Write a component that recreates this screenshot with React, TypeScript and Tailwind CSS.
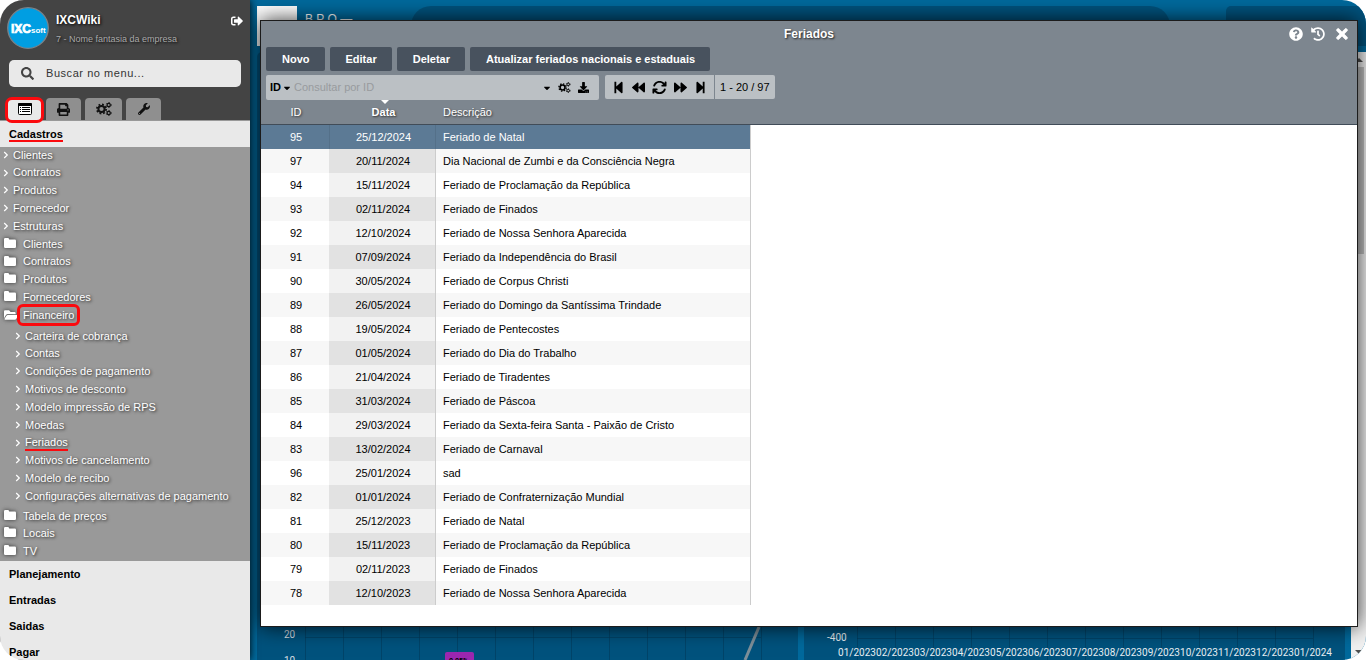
import { useState } from "react";
import {
  FaBackward,
  FaCaretDown,
  FaDownload,
  FaFolderOpen,
  FaForward,
  FaHistory,
  FaPrint,
  FaQuestionCircle,
  FaSearch,
  FaSignOutAlt,
  FaStepBackward,
  FaStepForward,
  FaTimes,
  FaWrench,
} from "react-icons/fa";
import { FaArrowsRotate } from "react-icons/fa6";

type Holiday = { id: number; date: string; name: string };

const holidays: Holiday[] = [
  { id: 95, date: "25/12/2024", name: "Feriado de Natal" },
  { id: 97, date: "20/11/2024", name: "Dia Nacional de Zumbi e da Consciência Negra" },
  { id: 94, date: "15/11/2024", name: "Feriado de Proclamação da República" },
  { id: 93, date: "02/11/2024", name: "Feriado de Finados" },
  { id: 92, date: "12/10/2024", name: "Feriado de Nossa Senhora Aparecida" },
  { id: 91, date: "07/09/2024", name: "Feriado da Independência do Brasil" },
  { id: 90, date: "30/05/2024", name: "Feriado de Corpus Christi" },
  { id: 89, date: "26/05/2024", name: "Feriado do Domingo da Santíssima Trindade" },
  { id: 88, date: "19/05/2024", name: "Feriado de Pentecostes" },
  { id: 87, date: "01/05/2024", name: "Feriado do Dia do Trabalho" },
  { id: 86, date: "21/04/2024", name: "Feriado de Tiradentes" },
  { id: 85, date: "31/03/2024", name: "Feriado de Páscoa" },
  { id: 84, date: "29/03/2024", name: "Feriado da Sexta-feira Santa - Paixão de Cristo" },
  { id: 83, date: "13/02/2024", name: "Feriado de Carnaval" },
  { id: 96, date: "25/01/2024", name: "sad" },
  { id: 82, date: "01/01/2024", name: "Feriado de Confraternização Mundial" },
  { id: 81, date: "25/12/2023", name: "Feriado de Natal" },
  { id: 80, date: "15/11/2023", name: "Feriado de Proclamação da República" },
  { id: 79, date: "02/11/2023", name: "Feriado de Finados" },
  { id: 78, date: "12/10/2023", name: "Feriado de Nossa Senhora Aparecida" },
];

const shortcuts = ["Clientes", "Contratos", "Produtos", "Fornecedor", "Estruturas"];
const folders = ["Clientes", "Contratos", "Produtos", "Fornecedores"];
const financeItems = [
  "Carteira de cobrança",
  "Contas",
  "Condições de pagamento",
  "Motivos de desconto",
  "Modelo impressão de RPS",
  "Moedas",
  "Feriados",
  "Motivos de cancelamento",
  "Modelo de recibo",
  "Configurações alternativas de pagamento",
];
const lastFolders = ["Tabela de preços", "Locais", "TV"];
const sections = ["Planejamento", "Entradas", "Saidas", "Pagar"];
const months = [
  "01/2023", "02/2023", "03/2023", "04/2023", "05/2023", "06/2023", "07/2023",
  "08/2023", "09/2023", "10/2023", "11/2023", "12/2023", "01/2024",
];

function Chevron() {
  return (
    <svg viewBox="0 0 6 8" className="h-2 w-1.5 shrink-0" fill="none" stroke="currentColor" strokeWidth="1.2" aria-hidden="true">
      <path d="M1.2 1 4.3 4 1.2 7" />
    </svg>
  );
}

function ListIcon() {
  return (
    <svg viewBox="0 0 14 12" className="h-3 w-3.5" aria-hidden="true">
      <rect x="0.5" y="0.5" width="13" height="11" rx="1" fill="#fff" stroke="#000" />
      <rect x="0" y="0" width="14" height="3" rx="1" fill="#000" />
      <path d="M2 4.5h1M2 6.5h1M2 8.5h1M4 4.5h8M4 6.5h8M4 8.5h8" stroke="#000" />
    </svg>
  );
}

function GearsIcon({ className }: { className: string }) {
  return (
    <svg viewBox="0 0 16 14" className={className} fill="none" stroke="currentColor" aria-hidden="true">
      <circle cx="5.5" cy="7" r="3.1" strokeWidth="2" />
      <circle cx="5.5" cy="7" r="4.6" strokeWidth="1.8" strokeDasharray="1.81 1.8" />
      <circle cx="12.7" cy="3" r="1.6" strokeWidth="1.2" />
      <circle cx="12.7" cy="3" r="2.4" strokeWidth="1" strokeDasharray="1.26 1.25" />
      <circle cx="12.7" cy="11" r="1.6" strokeWidth="1.2" />
      <circle cx="12.7" cy="11" r="2.4" strokeWidth="1" strokeDasharray="1.26 1.25" />
    </svg>
  );
}

function FolderIcon() {
  return (
    <svg viewBox="0 0 12 10" className="mb-0.5 h-2.5 w-3 shrink-0 drop-shadow-[0_0_2px_#333]" fill="#fff" aria-hidden="true">
      <path d="M0 1.2Q0 0 1.2 0H4Q5.2 0 5.2 1.5H10.8Q12 1.5 12 2.7V8.8Q12 10 10.8 10H1.2Q0 10 0 8.8Z" />
    </svg>
  );
}

function ShortcutLink({ label }: { label: string }) {
  return (
    <li className="flex">
      <a href="#" className="flex items-center gap-1 pl-[3px]">
        <Chevron />
        {label}
      </a>
    </li>
  );
}

function FolderLink({ label }: { label: string }) {
  return (
    <li className="flex">
      <a href="#" className="flex items-center gap-[7px] pl-1">
        <FolderIcon />
        {label}
      </a>
    </li>
  );
}

function Sidebar() {
  return (
    <aside className="relative z-10 flex w-[250px] shrink-0 flex-col bg-[#e9e9e9] shadow-[0_0_8px_#000]">
      <header className="flex h-[121px] shrink-0 flex-col border-b border-[#999] bg-[#444]">
        <div className="flex items-start pt-[7px] pl-[7px]">
          <svg viewBox="0 0 42 42" className="h-[42px] w-[42px] shrink-0" role="img" aria-label="IXC soft">
            <circle cx="21" cy="21" r="20.3" fill="#009ee2" stroke="#7b8288" strokeWidth="1.3" />
            <text x="4" y="26" fontFamily="Liberation Sans, Arial, sans-serif" fontWeight="700" fontSize="12" fill="#fff" stroke="#fff" strokeWidth="0.7">IXC</text>
            <text x="24" y="26" fontFamily="Liberation Sans, Arial, sans-serif" fontWeight="700" fontSize="8" fill="#fff">soft</text>
          </svg>
          <div className="ml-[7px] flex flex-1 flex-col pt-1 [text-shadow:1px_1px_3px_#000]">
            <strong className="text-[12px] leading-[18px] text-white">IXCWiki</strong>
            <span className="text-[9px] leading-[20px] text-[#aaa]">7 - Nome fantasia da empresa</span>
          </div>
          <button type="button" aria-label="Sair" className="mt-2 mr-[7px] text-white">
            <FaSignOutAlt className="h-3 w-3" />
          </button>
        </div>
        <label className="mx-[9px] mt-[11px] flex h-[27px] shrink-0 items-center gap-3 rounded-[5px] bg-[#e9e9e9] pl-3">
          <FaSearch className="h-[13px] w-[13px] text-[#444]" />
          <input
            type="text"
            aria-label="Buscar no menu"
            placeholder="Buscar no menu..."
            className="min-w-0 flex-1 bg-transparent text-[11px] tracking-wider outline-none placeholder:text-[#333]"
          />
        </label>
        <div className="mt-auto flex gap-1 pl-[7px] text-[#111]">
          <button type="button" aria-label="Menu" className="relative flex h-[22px] w-[35px] items-center justify-center rounded-t-[4px] bg-[#e9e9e9]">
            <ListIcon />
            <span className="absolute -inset-x-0.5 -top-px -bottom-[3px] rounded-[7px] border-3 border-[#fb0a0e]" />
          </button>
          <button type="button" aria-label="Imprimir" className="flex h-[22px] w-[35px] items-center justify-center rounded-t-[4px] bg-[#8f8f8f]">
            <FaPrint className="h-[13px] w-[13px]" />
          </button>
          <button type="button" aria-label="Configurações" className="flex h-[22px] w-[37px] items-center justify-center rounded-t-[4px] bg-[#8f8f8f]">
            <GearsIcon className="h-3.5 w-4" />
          </button>
          <button type="button" aria-label="Ferramentas" className="flex h-[22px] w-[35px] items-center justify-center rounded-t-[4px] bg-[#8f8f8f]">
            <FaWrench className="h-3 w-3" />
          </button>
        </div>
      </header>

      <a href="#" className="flex h-[26px] shrink-0 items-center px-[9px] text-[11px] font-bold text-black">
        <span className="relative">
          Cadastros
          <span className="absolute inset-x-0 bottom-0 h-0.5 bg-[#fb0a0e]" />
        </span>
      </a>

      <nav aria-label="Cadastros" className="h-[414px] shrink-0 bg-[#999] text-[11px] text-white [text-shadow:1px_1px_3px_#222]">
        <ul className="-mt-px grid h-[178px] auto-rows-fr">
          {shortcuts.map((label) => (
            <ShortcutLink key={label} label={label} />
          ))}
          {folders.map((label) => (
            <FolderLink key={label} label={label} />
          ))}
          <li className="flex">
            <a href="#" className="flex items-center gap-[5px] pl-1">
              <FaFolderOpen className="h-3.5 w-3.5 shrink-0 text-white drop-shadow-[0_0_2px_#333]" />
              <span className="relative">
                Financeiro
                <span className="absolute -inset-x-1.5 -inset-y-[3px] rounded-[6px] border-3 border-[#fb0a0e]" />
              </span>
            </a>
          </li>
        </ul>
        <ul className="mt-[3px] mb-0.5 grid h-[178px] auto-rows-fr pl-3">
          {financeItems.map((label) =>
            label === "Feriados" ? (
              <li key={label} className="flex">
                <a href="#" className="flex items-center gap-1 pl-[3px]">
                  <Chevron />
                  <span className="relative">
                    {label}
                    <span className="absolute inset-x-0 bottom-0 h-0.5 bg-[#fb0a0e]" />
                  </span>
                </a>
              </li>
            ) : (
              <ShortcutLink key={label} label={label} />
            ),
          )}
        </ul>
        <ul className="grid h-[53px] auto-rows-fr">
          {lastFolders.map((label) => (
            <FolderLink key={label} label={label} />
          ))}
        </ul>
      </nav>

      {sections.map((label) => (
        <a key={label} href="#" className="flex h-[26px] shrink-0 items-center px-[9px] text-[11px] font-bold text-black">
          {label}
        </a>
      ))}
    </aside>
  );
}

function GridLines({ from, y, count }: { from: number; y: number; count: number }) {
  const xs = Array.from({ length: count }, (_, i) => from + i * 38);
  return (
    <g stroke="#00395a" strokeOpacity="0.55">
      {xs.map((x) => (
        <path key={x} d={`M${x + 0.5} 0V33`} />
      ))}
      <path d={`M${from} ${y}H${from + (count - 1) * 38}`} />
    </g>
  );
}

function Dashboard() {
  return (
    <div className="flex h-full flex-col bg-[#00699c]">
      <div className="flex h-[52px] shrink-0 items-start pt-1.5 pl-[7px]">
        <div className="h-10 w-10 bg-white" />
        <span className="ml-2 w-[46px] pt-1 text-[12px] whitespace-nowrap text-white">B P O —</span>
        <div className="mr-14 ml-[60px] h-10 flex-1 rounded-[20px] bg-[#00527d]" />
        <div className="h-10 w-[140px] rounded-l-[5px] bg-[#00527d]" />
      </div>
      <div className="flex min-h-0 flex-1">
        <div className="flex flex-1 gap-1.5 pr-1.5 pl-[7px]">
          <section className="flex flex-1 flex-col justify-end rounded-t-[5px] bg-[#00527d]">
            <svg viewBox="0 0 541 33" className="w-full" fontFamily="Roboto, sans-serif" fontSize="10" fill="#d5dde2">
              <GridLines from={48} y={10.5} count={13} />
              <text x="27" y="11">20</text>
              <text x="27" y="37">10</text>
              <path d="M502 0 488 33" stroke="#7d8f99" strokeWidth="3" />
              <rect x="188" y="25" width="29" height="12" rx="2" fill="#9c27b0" />
              <text x="192" y="36" fontSize="7" fontWeight="700" fill="#000">0.05%</text>
            </svg>
          </section>
          <section className="flex flex-1 flex-col justify-end rounded-t-[5px] bg-[#00527d]">
            <svg viewBox="0 0 541 33" className="w-full" fontFamily="Roboto, sans-serif" fontSize="10" fill="#e8eef2">
              <GridLines from={53} y={11.5} count={13} />
              <text x="23" y="14">-400</text>
              {months.map((month, i) => (
                <text key={month} x={53 + i * 38} y="29" textAnchor="middle">
                  {month}
                </text>
              ))}
            </svg>
          </section>
        </div>
        <div className="flex w-[15px] shrink-0 flex-col items-center bg-[#f1f1f1] py-1.5 text-[#505050]">
          <svg viewBox="0 0 8 4" className="h-1 w-2" fill="currentColor" aria-hidden="true">
            <path d="M0 4 4 0l4 4z" />
          </svg>
          <div className="mt-[5px] h-[187px] w-[11px] bg-[#c1c1c1]" />
          <svg viewBox="0 0 8 4" className="mt-auto h-1 w-2" fill="currentColor" aria-hidden="true">
            <path d="M0 0h8L4 4z" />
          </svg>
        </div>
      </div>
    </div>
  );
}

function ToolbarButton({ children }: { children: string }) {
  return (
    <button type="button" className="h-6 rounded-[2px] bg-[#48525e] pr-[15px] pl-4 text-[11px] font-bold text-white">
      {children}
    </button>
  );
}

function HolidayTable() {
  const [selected, setSelected] = useState(95);
  return (
    <table className="w-[490px] table-fixed border-separate border-spacing-0 text-[11px]">
      <colgroup>
        <col className="w-[68px]" />
        <col className="w-[107px]" />
        <col />
      </colgroup>
      <thead>
        <tr className="h-[25px] text-white [text-shadow:1px_1px_2px_#333]">
          <th scope="col" className="p-0 pl-0.5 font-normal">ID</th>
          <th scope="col" aria-sort="descending" className="relative p-0 pl-0.5 font-bold">
            <svg viewBox="0 0 8 4" className="absolute top-0 left-[52px] h-1 w-2" fill="#fff" aria-hidden="true">
              <path d="M0 0h8L4 4z" />
            </svg>
            Data
          </th>
          <th scope="col" className="p-0 pl-[7px] text-left font-normal">Descrição</th>
        </tr>
      </thead>
      <tbody>
        {holidays.map((h) => {
          const active = h.id === selected;
          return (
            <tr
              key={h.id}
              onClick={() => setSelected(h.id)}
              className={
                active
                  ? "h-6 bg-[#5c7a95] text-white"
                  : "group h-6 text-black odd:bg-white even:bg-[#f7f7f7]"
              }
            >
              <td className="p-0 pl-0.5 text-center">{h.id}</td>
              <td
                className={
                  active
                    ? "border-x border-[#547089] p-0 pl-0.5 text-center"
                    : "border-r border-[#ccc] p-0 pl-0.5 text-center group-odd:bg-[#f2f2f2] group-even:bg-[#e2e2e2]"
                }
              >
                {h.date}
              </td>
              <td className="border-r border-[#ccc] p-0 pl-[7px]">{h.name}</td>
            </tr>
          );
        })}
      </tbody>
    </table>
  );
}

function HolidaysWindow() {
  return (
    <section
      aria-label="Feriados"
      className="absolute top-5 right-2 bottom-[33px] left-2.5 flex flex-col border border-[#1c1c1c] bg-white shadow-[0_0_20px_rgba(0,0,0,0.8)]"
    >
      <div className="flex h-[104px] shrink-0 flex-col border-b border-[#414c58] bg-[#7d868f]">
        <div className="grid h-[26px] shrink-0 grid-cols-[1fr_auto_1fr] items-center">
          <h1 className="col-start-2 text-[12px] font-bold text-white [text-shadow:1px_1px_2px_#222]">Feriados</h1>
          <div className="flex items-center justify-end gap-2 pr-[7px] text-white">
            <button type="button" aria-label="Ajuda"><FaQuestionCircle className="h-3.5 w-3.5" /></button>
            <button type="button" aria-label="Histórico"><FaHistory className="h-3.5 w-3.5" /></button>
            <button type="button" aria-label="Fechar" className="ml-px"><FaTimes className="h-4 w-4" stroke="#fff" strokeWidth="24" /></button>
          </div>
        </div>
        <div className="flex gap-[5px] pl-[5px]">
          <ToolbarButton>Novo</ToolbarButton>
          <ToolbarButton>Editar</ToolbarButton>
          <ToolbarButton>Deletar</ToolbarButton>
          <ToolbarButton>Atualizar feriados nacionais e estaduais</ToolbarButton>
        </div>
        <div className="mt-1 flex items-start gap-1.5 pl-[5px] text-[11px] text-black">
          <div className="flex h-[25px] w-[333px] items-center rounded-[2px] bg-[#bbc0c4] pr-2.5 pl-1">
            <button type="button" className="flex items-center gap-px font-bold">
              ID
              <FaCaretDown className="h-2.5 w-2.5" />
            </button>
            <input
              type="text"
              aria-label="Consultar por ID"
              placeholder="Consultar por ID"
              className="ml-0.5 min-w-0 flex-1 bg-transparent outline-none placeholder:text-[#989b9e]"
            />
            <button type="button" aria-label="Opções"><FaCaretDown className="h-2.5 w-2.5" /></button>
            <button type="button" aria-label="Filtros" className="ml-1.5"><GearsIcon className="h-[11px] w-[13px]" /></button>
            <button type="button" aria-label="Baixar" className="ml-[7px]"><FaDownload className="h-[11px] w-[11px]" /></button>
          </div>
          <div className="flex h-6 items-center rounded-[2px] bg-[#bbc0c4]">
            <div className="flex h-full items-center gap-[7px] border-r border-[#7d868f] px-[7px]">
              <button type="button" aria-label="Primeira página"><FaStepBackward className="h-[13px] w-[13px]" /></button>
              <button type="button" aria-label="Página anterior"><FaBackward className="h-[13px] w-[13px]" /></button>
              <button type="button" aria-label="Atualizar"><FaArrowsRotate className="h-[15px] w-[15px]" /></button>
              <button type="button" aria-label="Próxima página"><FaForward className="h-[13px] w-[13px]" /></button>
              <button type="button" aria-label="Última página"><FaStepForward className="h-[13px] w-[13px]" /></button>
            </div>
            <span className="px-[5px]">1 - 20 / 97</span>
          </div>
        </div>
      </div>
      <div className="-mt-[25px]">
        <HolidayTable />
      </div>
    </section>
  );
}

export default function App() {
  return (
    <div className="flex h-screen overflow-hidden rounded-[24px] bg-white font-['Liberation_Sans',Arial,sans-serif]">
      <Sidebar />
      <main className="relative min-w-0 flex-1">
        <Dashboard />
        <HolidaysWindow />
      </main>
    </div>
  );
}
